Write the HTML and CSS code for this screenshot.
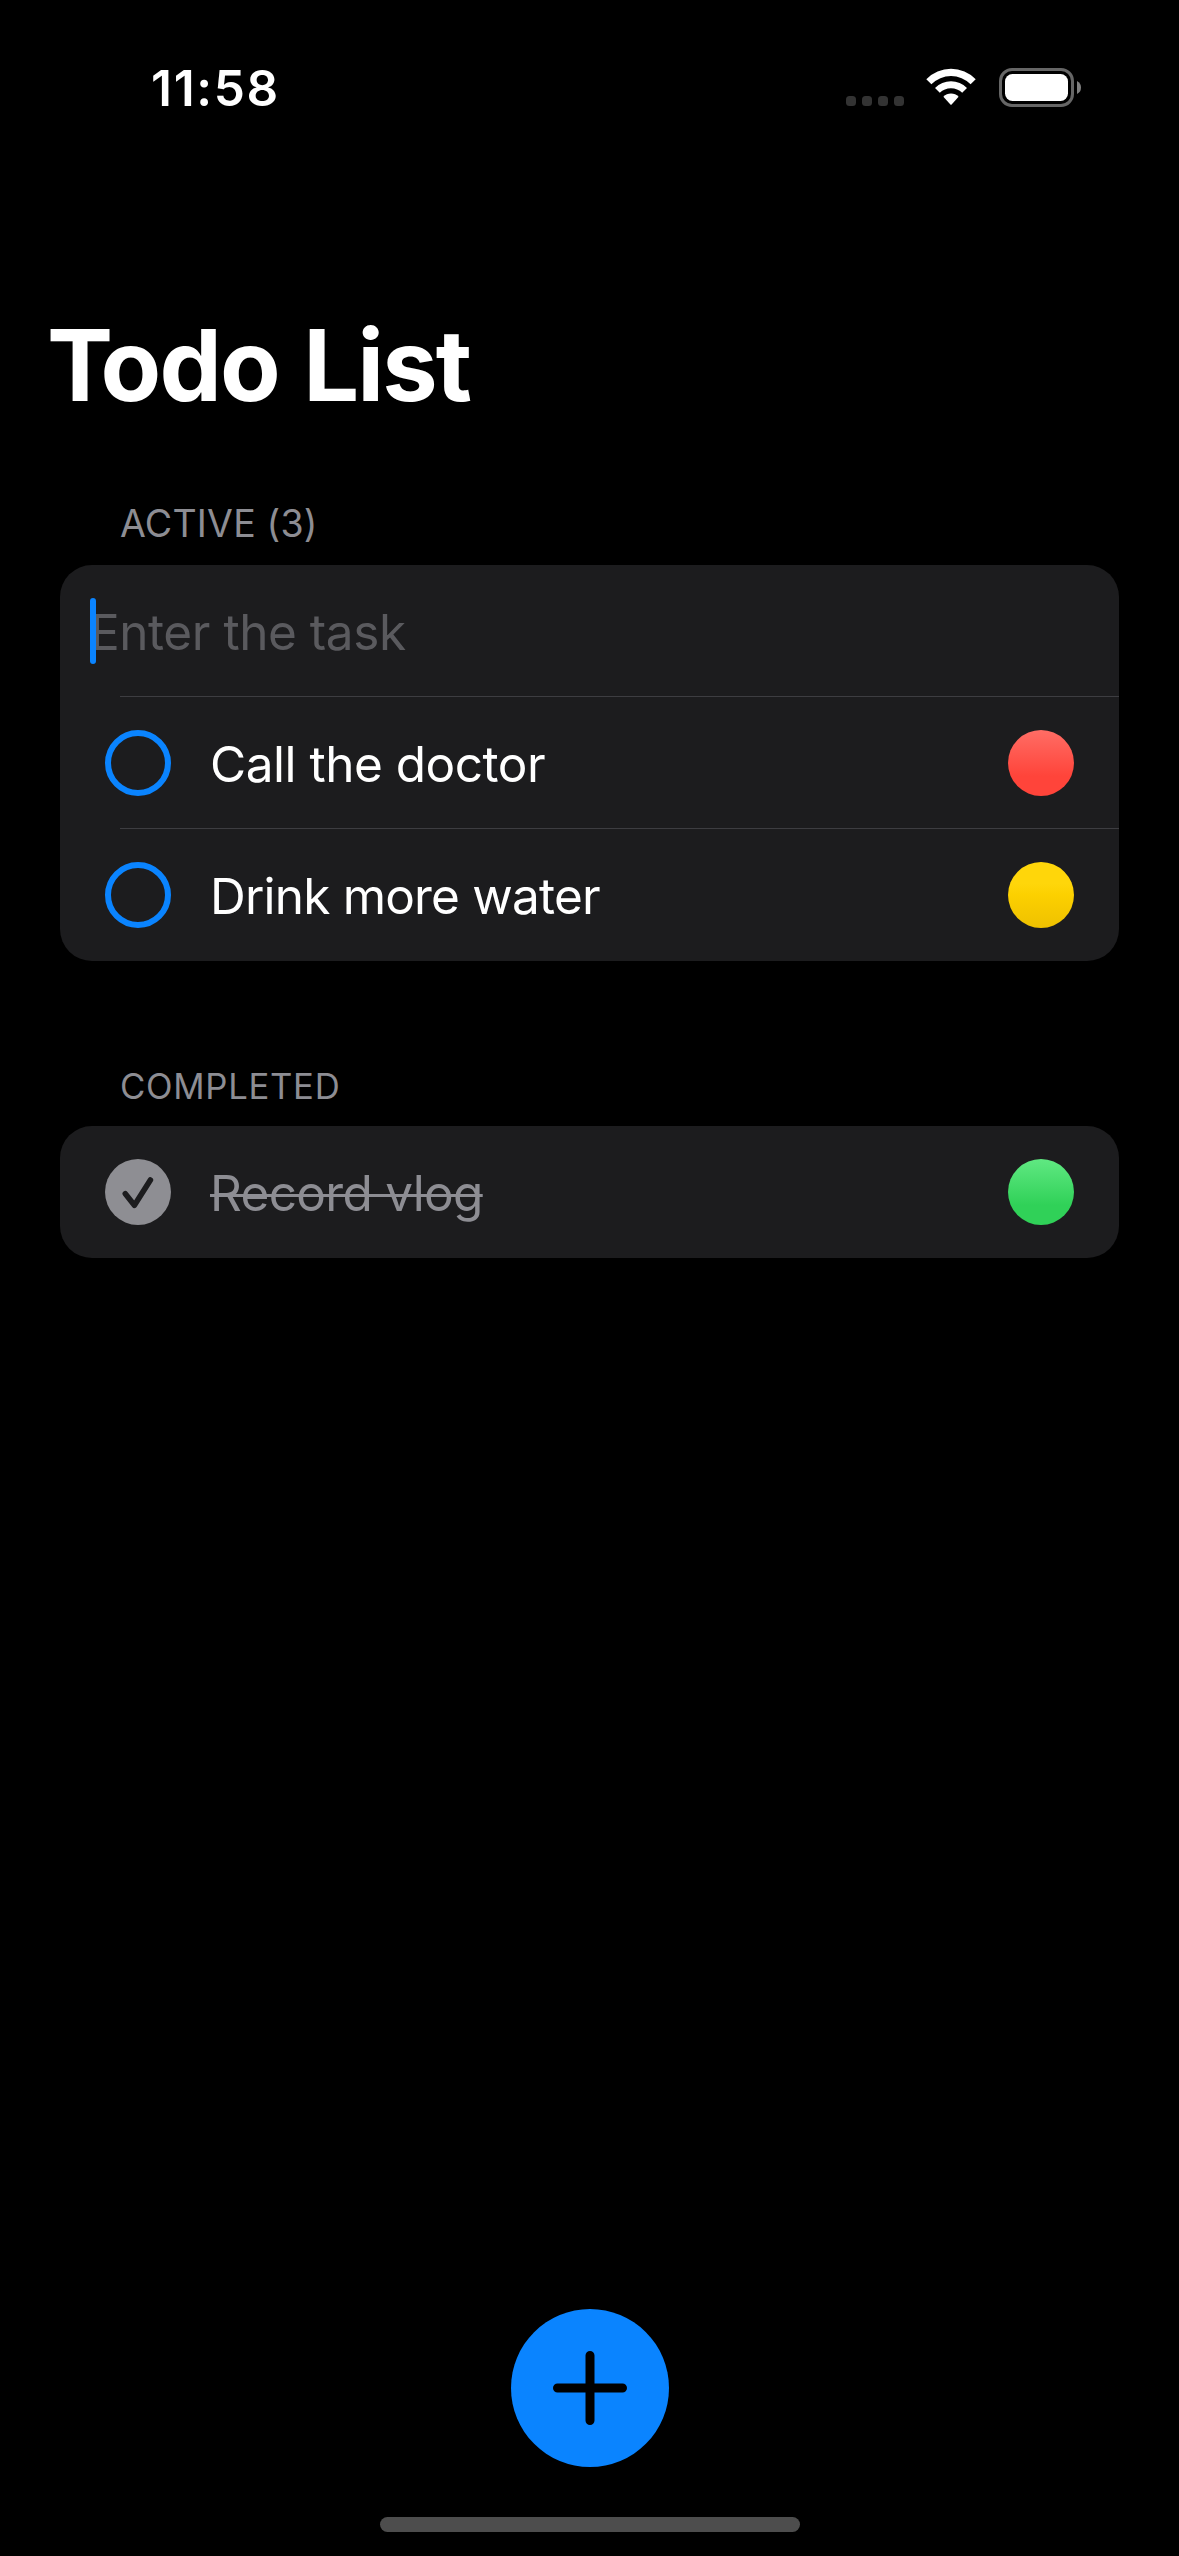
FILE: index.html
```
<!DOCTYPE html>
<html lang="en">
<head>
<meta charset="utf-8">
<title>Todo List</title>
<link rel="stylesheet" href="styles.css">
</head>
<body>
<div class="screen">
  <header class="status-bar">
    <time class="clock">11:58</time>
    <div class="status-icons">
      <div class="cellular"><i></i><i></i><i></i><i></i></div>
      <svg class="wifi" width="50" height="38" viewBox="0 0 50 38" fill="#fff">
        <path d="M0.3 11.2A34.6 34.6 0 0 1 49.7 11.2L44.6 16.2A27.6 27.6 0 0 0 5.4 16.2Z"/>
        <path d="M9 20A22.6 22.6 0 0 1 41 20L36.2 24.8A15.9 15.9 0 0 0 13.8 24.8Z"/>
        <path d="M17.4 28.8A10.6 10.6 0 0 1 32.6 28.8L25.6 36.4Q25 37 24.4 36.4Z"/>
      </svg>
      <svg class="battery" width="83" height="39" viewBox="0 0 83 39">
        <rect x="1.5" y="1.5" width="72" height="36" rx="11.5" fill="none" stroke="#666" stroke-width="3"/>
        <rect x="6" y="6" width="63" height="27" rx="7.5" fill="#fff"/>
        <path d="M78 13Q82 15 82 19.5T78 26Z" fill="#808080"/>
      </svg>
    </div>
  </header>

  <main class="content">
    <h1 class="title"><span class="kern">T</span>odo List</h1>

    <h2 class="section-title section-active">ACTIVE (3)</h2>
    <ul class="card">
      <li class="row input-row">
        <span class="caret"></span>
        <span class="label placeholder">Enter the task</span>
      </li>
      <li class="row">
        <span class="check"></span>
        <span class="label call">Call the doctor</span>
        <span class="dot red"></span>
      </li>
      <li class="row">
        <span class="check"></span>
        <span class="label drink">Drink more water</span>
        <span class="dot yellow"></span>
      </li>
    </ul>

    <h2 class="section-title section-completed">COMPLETED</h2>
    <ul class="card">
      <li class="row">
        <svg class="check-done" width="66" height="66" viewBox="0 0 66 66">
          <circle cx="33" cy="33" r="33" fill="#8e8e93"/>
          <path d="M20.3 34.8L29.4 46.2L45.4 21" fill="none" stroke="#1c1c1e" stroke-width="5.6" stroke-linecap="round" stroke-linejoin="round"/>
        </svg>
        <span class="label done">Record vlog</span>
        <span class="dot green"></span>
      </li>
    </ul>
  </main>

  <footer class="footer">
    <button class="add" aria-label="Add task">
      <svg width="74" height="74" viewBox="0 0 74 74" stroke="#000" stroke-width="9" stroke-linecap="round">
        <path d="M37 4.5V69.5M4.5 37H69.5"/>
      </svg>
    </button>
    <div class="home-indicator"></div>
  </footer>
</div>
</body>
</html>
```
FILE: styles.css
```
* {
  box-sizing: border-box;
  margin: 0;
  padding: 0;
}

body {
  background: #000;
  color: #fff;
  font-family: Inter, "Liberation Sans", sans-serif;
}

.screen {
  width: 1179px;
  height: 2556px;
  display: flex;
  flex-direction: column;
  background: #000;
  overflow: hidden;
}

/* Status bar */
.status-bar {
  height: 176px;
  padding: 58px 97px 0 151px;
  display: flex;
  justify-content: space-between;
  align-items: flex-start;
}

.clock {
  font-size: 49.5px;
  font-weight: 600;
  line-height: 60px;
  letter-spacing: 1.7px;
}

.status-icons {
  display: flex;
  align-items: flex-end;
  padding-top: 10px;
}

.cellular {
  display: flex;
  gap: 6px;
  margin: 0 22px 1px 0;
}

.cellular i {
  width: 10px;
  height: 10px;
  border-radius: 3.5px;
  background: #333;
}

.wifi {
  margin: 0 23px 1px 0;
}

/* Content */
.content {
  flex: 1;
}

.title {
  margin: 129px 0 0 47px;
  font-size: 99px;
  font-weight: 700;
  line-height: 120px;
  letter-spacing: -1.9px;
  word-spacing: 3px;
}

.kern {
  letter-spacing: -12.5px;
}

.section-title {
  padding-left: 120px;
  font-weight: 400;
  line-height: 48px;
  color: #8d8d93;
}

.section-active {
  margin: 75px 0 17px;
  font-size: 37.5px;
  letter-spacing: 0.2px;
}

.section-completed {
  margin: 101px 0 16px;
  font-size: 34.7px;
  letter-spacing: 0.7px;
}

.card {
  margin: 0 60px;
  border-radius: 32px;
  background: #1c1c1e;
  list-style: none;
}

.row {
  height: 132px;
  padding: 0 45px;
  display: flex;
  align-items: center;
  background: linear-gradient(#3d3d41, #3d3d41) right bottom / 999px 1px no-repeat;
}

.row:last-child {
  background: none;
}

.input-row {
  position: relative;
  padding-left: 30px;
}

.caret {
  position: absolute;
  left: 30px;
  top: 33px;
  width: 6px;
  height: 66px;
  border-radius: 3px;
  background: #0a84ff;
}

.label {
  padding-top: 2px;
  font-size: 49.5px;
  line-height: 60px;
  white-space: nowrap;
}

.placeholder {
  letter-spacing: -0.45px;
  color: #5a5a5e;
}

.check,
.check-done {
  width: 66px;
  height: 66px;
  flex: none;
  margin-right: 39px;
}

.check {
  border: 6px solid #0a84ff;
  border-radius: 50%;
}

.call {
  letter-spacing: -0.48px;
}

.drink {
  letter-spacing: -0.8px;
}

.done {
  letter-spacing: -0.67px;
  color: #8d8d93;
  text-decoration: line-through;
  text-decoration-thickness: 3px;
}

.dot {
  width: 66px;
  height: 66px;
  margin-left: auto;
  border-radius: 50%;
}

.red {
  background: linear-gradient(#ff6d65, #ff443a 70%);
}

.yellow {
  background: linear-gradient(#ffd60a 33%, #fcd000 50%, #efc100);
}

.green {
  background: linear-gradient(#60e882, #30d158 70%);
}

/* Footer */
.footer {
  display: flex;
  flex-direction: column;
  align-items: center;
  gap: 50px;
  padding-bottom: 24px;
}

.add {
  width: 158px;
  height: 158px;
  display: flex;
  align-items: center;
  justify-content: center;
  border: 0;
  border-radius: 50%;
  background: #0a84ff;
}

.home-indicator {
  width: 420px;
  height: 15px;
  border-radius: 8px;
  background: #4d4d4d;
}
```
